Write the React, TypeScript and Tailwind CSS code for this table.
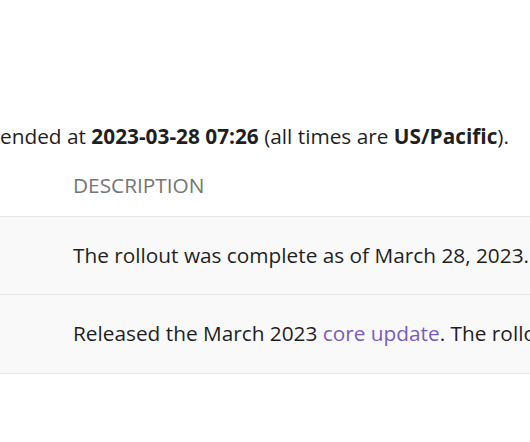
export default function App() {
  return (
    <div className="w-[530px] h-[442px] bg-white overflow-hidden text-[#1f1f1f]" style={{ fontFamily: '"Open Sans", sans-serif' }}>
      <div className="pt-[122px] text-[20.8px] leading-[28px] whitespace-nowrap">
        ended at <b>2023-03-28 07:26</b> (all times are <b>US/Pacific</b>).
      </div>
      <div className="mt-[21px] pl-[73px] text-[20.8px] leading-[28px] text-[#757575] whitespace-nowrap h-[45px]">DESCRIPTION</div>
      <div className="border-t border-[#e6e6e6]">
        <div className="h-[78px] bg-[#f9f9f9] flex items-center pl-[73px] text-[20.8px] whitespace-nowrap border-b border-[#e6e6e6] overflow-hidden">
          The rollout was complete as of March 28, 2023.
        </div>
        <div className="h-[79px] bg-[#f9f9f9] flex items-center pl-[73px] text-[20.8px] whitespace-nowrap border-b border-[#e6e6e6] overflow-hidden">
          Released the March 2023&nbsp;<span className="text-[#7a5cbd]">core update</span>. The rollout was expected to take about 2 weeks.
        </div>
      </div>
    </div>
  );
}
